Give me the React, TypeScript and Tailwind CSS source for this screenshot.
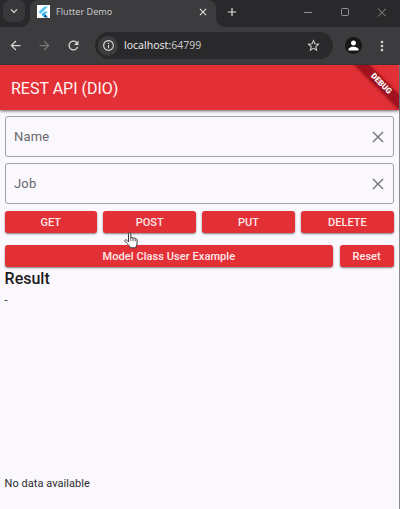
import React from 'react';
import { MdArrowBack, MdArrowForward, MdRefresh, MdStarBorder, MdPerson, MdMoreVert, MdClose, MdInfoOutline, MdAdd, MdKeyboardArrowDown } from 'react-icons/md';

function FlutterMark() {
  return (
    <span className="flex h-[13px] w-[13px] items-center justify-center bg-white">
      <svg width="11" height="12" viewBox="0 0 22 24">
        <path d="M13 1h7L5 16l-4-4z" fill="#54c5f8" />
        <path d="M13 11h7l-6 6-4-3z" fill="#54c5f8" />
        <path d="M7 17l4-4 4 4-4 4z" fill="#2baee8" />
        <path d="M11 21l4-4 5 6h-7z" fill="#01579b" />
      </svg>
    </span>
  );
}

function TabStrip() {
  return (
    <div className="flex h-[27px] bg-[#29282a] text-[#e3e3e3]">
      <div className="w-[30px] bg-[#3c3b3d]">
        <div className="flex h-[27px] w-[30px] items-center justify-center rounded-br-[9px] bg-[#29282a] pr-[2px]">
          <span className="mb-[5px] flex h-[22px] w-[22px] items-center justify-center rounded-[7px] bg-[#38373a]">
            <MdKeyboardArrowDown size={14} />
          </span>
        </div>
      </div>
      <div className="flex w-[186px] items-center rounded-t-[8px] bg-[#3c3b3d] pb-[4px] pl-[7px] pr-[7px]">
        <FlutterMark />
        <span className="ml-[6px] flex-1 whitespace-nowrap font-['Noto_Sans',sans-serif] text-[9.1px] text-[#c9c8ca]">Flutter Demo</span>
        <MdClose size={12} />
      </div>
      <div className="flex flex-1 bg-[#3c3b3d]">
        <div className="flex flex-1 items-center rounded-bl-[9px] bg-[#29282a] pb-[4px]">
          <MdAdd size={14} className="ml-[9px]" />
          <svg width="82" height="12" viewBox="0 0 82 12" className="ml-[65px] fill-none stroke-[#929193]">
            <path d="M0 6.5h8M74 2.5l8 8M82 2.5l-8 8" />
            <rect x="37.5" y="2.5" width="7" height="7" rx="1" />
          </svg>
        </div>
      </div>
    </div>
  );
}

function Toolbar() {
  return (
    <div className="flex h-[38px] items-center bg-[#3c3b3d] pb-px text-[#d5d4d6]">
      <MdArrowBack size={15} className="ml-[8px]" />
      <MdArrowForward size={15} className="ml-[14px] text-[#777678]" />
      <MdRefresh size={15} className="ml-[14px]" />
      <div className="ml-[14px] flex h-[27px] w-[238px] items-center rounded-full bg-[#29282a] pr-[12px]">
        <span className="ml-[3px] flex h-[20px] w-[20px] items-center justify-center rounded-full bg-[#3c3b3d]">
          <MdInfoOutline size={13} />
        </span>
        <span className="ml-[6px] flex-1 font-['Noto_Sans',sans-serif] text-[10.5px] text-[#e7e6e8]">
          localhost:<span className="text-[#c7c6c8]">64799</span>
        </span>
        <MdStarBorder size={15} />
      </div>
      <span className="ml-[12px] flex h-[17px] w-[17px] items-center justify-center rounded-full bg-[#171618] text-white">
        <MdPerson size={15} />
      </span>
      <MdMoreVert size={16} className="ml-[12px]" />
    </div>
  );
}

function AppBar() {
  return (
    <header className="relative z-10 h-[45px] bg-[#e33036] shadow-[0_1px_3px_rgba(0,0,0,0.6)]">
      <h1 className="pl-[11px] text-[16px] leading-[47px] text-[#fff3f3]">REST API (DIO)</h1>
      <div className="absolute right-0 top-0 h-[45px] w-[60px] overflow-hidden">
        <div className="absolute left-[-8px] top-[14px] h-[10px] w-[100px] rotate-45 bg-[#a01220] text-center text-[8px] font-black leading-[10px] text-white shadow-[0_0_4px_rgba(90,0,0,0.65)]">
          DEBUG
        </div>
      </div>
    </header>
  );
}

function Field({ label }: { label: string }) {
  return (
    <div className="flex h-[41px] items-center justify-between rounded-[3px] border border-[#a2a1a4] pl-[8.5px] pr-[9px] text-[#69686b]">
      <span className="text-[13px] tracking-[0.1px]">{label}</span>
      <svg width="12" height="12" viewBox="0 0 12 12" className="stroke-[#737275] stroke-[1.4]">
        <path d="M1 1l10 10M11 1L1 11" />
      </svg>
    </div>
  );
}

function Button({ label, className }: { label: string; className: string }) {
  return (
    <button className={`${className} h-[22.5px] rounded-[3px] bg-[#e33036] text-[11px] font-medium leading-[24px] text-[#ffeaea] shadow-[0_1px_2px_rgba(0,0,0,0.5)]`}>
      {label}
    </button>
  );
}

function HandCursor() {
  return (
    <svg className="absolute left-[124px] top-[232px] z-20" width="14" height="17" viewBox="0 0 14 17">
      <path
        d="M4.5 10V2C4.5 .2 6.8 .2 6.8 2v4C7 5 9 5.1 9 6.4c.3-.9 2.2-.7 2.2.5.6-.7 2 0 1.9 1.2V11c0 1.6-1 2.6-1.2 4.8H6.3C5.9 13.6 2.8 11.5 1 9.4c-.9-1.3.8-2.2 1.9-1.1z"
        fill="#fff"
        stroke="#39383a"
        strokeWidth="1"
        strokeLinejoin="round"
      />
      <path d="M6.8 6v3M9 6.5v2.7M11.2 7v2.4" stroke="#39383a" strokeWidth=".8" />
    </svg>
  );
}

export default function App() {
  return (
    <div className="relative flex h-[509px] w-[400px] flex-col overflow-hidden bg-[#faf8fc] font-['Roboto',sans-serif]">
      <TabStrip />
      <Toolbar />
      <div className="flex flex-1 flex-col border-r border-[#8c8b8d]">
        <AppBar />
        <main className="flex flex-1 flex-col pl-[4.6px] pr-[5.4px] pt-[6px] text-[#1d1b20]">
          <Field label="Name" />
          <div className="h-[6px]" />
          <Field label="Job" />
          <div className="mt-[6.5px] flex gap-[6.5px]">
            <Button label="GET" className="flex-1" />
            <Button label="POST" className="flex-1" />
            <Button label="PUT" className="flex-1" />
            <Button label="DELETE" className="flex-1" />
          </div>
          <div className="mt-[11.8px] flex gap-[6.5px]">
            <Button label="Model Class User Example" className="flex-1 tracking-[0.07px]" />
            <Button label="Reset" className="w-[54px]" />
          </div>
          <h2 className="mt-px text-[16px] font-medium leading-[22px]">Result</h2>
          <p className="mt-[3px] text-[11px] leading-[15px]">-</p>
          <p className="mb-[18px] mt-auto text-[11px] leading-[15px] tracking-[0.04px] text-[#2c2b2f]">No data available</p>
        </main>
      </div>
      <HandCursor />
    </div>
  );
}
